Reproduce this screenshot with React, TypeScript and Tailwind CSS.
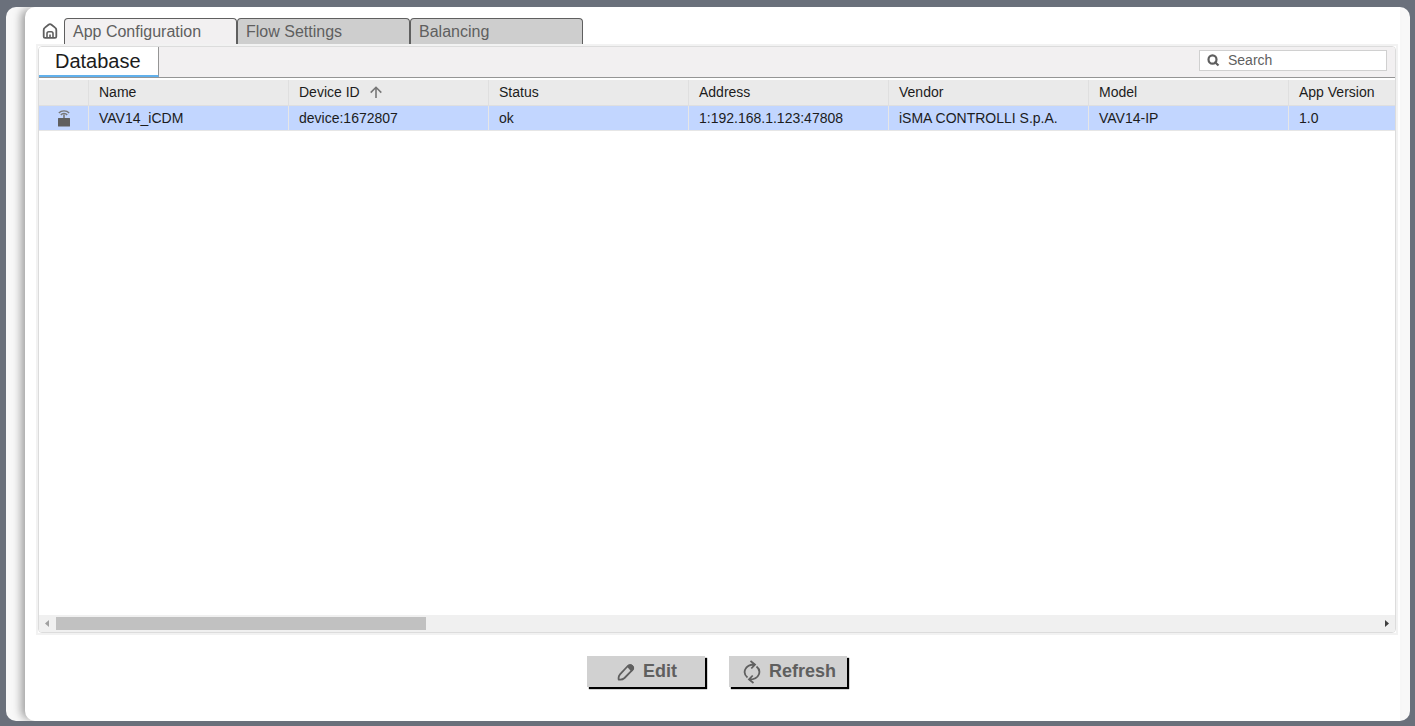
import React, { useState } from "react";

type Device = {
    name: string;
    deviceId: string;
    status: string;
    address: string;
    vendor: string;
    model: string;
    appVersion: string;
};

const TABS = ["App Configuration", "Flow Settings", "Balancing"];

const COLUMNS: { key: keyof Device; label: string }[] = [
    { key: "name", label: "Name" },
    { key: "deviceId", label: "Device ID" },
    { key: "status", label: "Status" },
    { key: "address", label: "Address" },
    { key: "vendor", label: "Vendor" },
    { key: "model", label: "Model" },
    { key: "appVersion", label: "App Version" },
];

const DEVICES: Device[] = [
    {
        name: "VAV14_iCDM",
        deviceId: "device:1672807",
        status: "ok",
        address: "1:192.168.1.123:47808",
        vendor: "iSMA CONTROLLI S.p.A.",
        model: "VAV14-IP",
        appVersion: "1.0",
    },
];

function HomeIcon() {
    return (
        <svg width="16" height="16" viewBox="0 0 16 16" fill="none" stroke="#5f5f5f" strokeWidth="1.8" strokeLinejoin="round">
            <path d="M1.700 7c0-1 .4-1.800 1.200-2.400L6.500 1.700a2.500 2.500 0 0 1 3 0l3.600 2.900c.8.6 1.200 1.400 1.200 2.400v6.500c0 .9-.5 1.400-1.400 1.400H3.100c-.9 0-1.400-.5-1.400-1.400z" />
            <path d="M5 14.500v-4A1.700 1.700 0 0 1 6.700 8.800h2.600a1.700 1.700 0 0 1 1.700 1.700v4" strokeWidth="1.6" />
            <path d="M8 11.500v3" strokeWidth="1.600" />
        </svg>
    );
}

function SearchIcon() {
    return (
        <svg width="13" height="13" viewBox="0 0 13 13" fill="none" stroke="#5f5f5f" strokeWidth="2.2">
            <ellipse cx="5.500" cy="5.500" rx="4" ry="4.200" />
            <path d="M7.500 7.800 11.500 11.500" />
        </svg>
    );
}

function SortIcon() {
    return (
        <svg width="12" height="12" viewBox="0 0 12 12" fill="none" stroke="#777" strokeWidth="1.6">
            <path d="M6 12V1.500M.7 6.600 6 1.300l5.300 5.300" />
        </svg>
    );
}

function DeviceIcon() {
    return (
        <svg className="mx-auto block" width="14" height="17" viewBox="0 0 14 17" fill="none" stroke="#777">
            <path d="M1.800 3C4.500.2 9.500.2 12.200 3M3.800 5c1.500-2 4.900-2 6.400 0" strokeWidth="1.3" />
            <path d="M7 4.500v4" strokeWidth="1.6" />
            <rect x="1" y="8" width="12" height="8.500" rx=".5" fill="#5f5f5f" stroke="none" />
        </svg>
    );
}

function PencilIcon() {
    return (
        <svg width="18" height="18" viewBox="0 0 18 18" fill="none" stroke="#5f5f5f" strokeWidth="1.8" strokeLinejoin="round">
            <path d="M1.700 16.500c-.3-1.700 0-3.800 1.300-5.200L10.800 3a3 3 0 0 1 4.300 0 3 3 0 0 1 .1 4.200L7.500 15c-1.500 1.400-3.900 1.900-5.800 1.500z" />
            <path d="M9.800 3.500 11 2.200a3.600 3.600 0 0 1 4.800.2 3.600 3.600 0 0 1 .2 5l-1.500 1.400z" fill="#5f5f5f" stroke="none" />
        </svg>
    );
}

function RefreshIcon() {
    return (
        <svg width="18" height="24" viewBox="0 0 18 24" fill="none" stroke="#5f5f5f" strokeWidth="1.8">
            <path d="M4.500 17.500C-.5 13.500.8 4.500 12 4.500M7.500 1 12 4.500 8.300 8.500" />
            <path d="M13.500 6.500c5 4 3.700 13-7.500 13M10.500 23 6 19.500l3.700-4" />
        </svg>
    );
}

function ActionButton({ label, icon, className }: { label: string; icon: React.ReactNode; className: string }) {
    return (
        <button
            type="button"
            className={`flex h-[31px] w-[118px] items-center gap-2 bg-[#d1d1d1] text-lg leading-none font-bold text-[#5f5f5f] shadow-[2px_2px_1px_#000] ${className}`}
        >
            {icon}
            <span className="pb-0.5">{label}</span>
        </button>
    );
}

function DeviceTable() {
    return (
        <table className="w-full table-fixed border-separate border-spacing-0 text-left text-sm text-[#1c1c1c]">
            <colgroup>
                <col className="w-[50px]" />
                {COLUMNS.map((c) => (
                    <col key={c.key} className={c.key === "appVersion" ? "" : "w-[200px]"} />
                ))}
            </colgroup>
            <thead>
                <tr className="bg-[#eaeaea]">
                    <th scope="col" aria-label="Type" className="h-[26px] border-r border-b border-[#dfdfdf] p-0" />
                    {COLUMNS.map((c) => (
                        <th key={c.key} scope="col" className="h-[26px] border-r border-b border-[#dfdfdf] px-2.5 pt-0 pb-px font-normal whitespace-nowrap last:border-r-0">
                            <span className="flex items-center gap-2.5">
                                {c.label}
                                {c.key === "deviceId" && <SortIcon />}
                            </span>
                        </th>
                    ))}
                </tr>
            </thead>
            <tbody>
                {DEVICES.map((d) => (
                    <tr key={d.deviceId} className="bg-[#c2d6ff]">
                        <td className="h-[25px] border-r border-b border-[#e6e6e6] p-0"><DeviceIcon /></td>
                        {COLUMNS.map((c) => (
                            <td key={c.key} className="h-[25px] border-r border-b border-[#e6e6e6] px-2.5 py-0 whitespace-nowrap last:border-r-0">
                                {d[c.key]}
                            </td>
                        ))}
                    </tr>
                ))}
            </tbody>
        </table>
    );
}

function ScrollBar() {
    return (
        <div className="flex h-[17px] items-center bg-[#f0f0f0]">
            <button type="button" aria-label="Scroll left" className="flex w-[17px] justify-center">
                <svg width="5" height="7" viewBox="0 0 5 7"><path d="M4 0v7L0 3.500z" fill="#a0a0a0" /></svg>
            </button>
            <div className="flex-1">
                <div className="h-[13px] w-[28%] bg-[#c1c1c1]" />
            </div>
            <button type="button" aria-label="Scroll right" className="flex w-[17px] justify-center">
                <svg width="4" height="7" viewBox="0 0 4 7"><path d="M0 0v7l4-3.500z" fill="#404040" /></svg>
            </button>
        </div>
    );
}

export default function App() {
    const [active, setActive] = useState(TABS[0]);

    return (
        <div className="h-screen bg-[#6a707b] pt-[7px] pr-[5px] pb-[5px] pl-[6px] font-['Liberation_Sans',Arial,sans-serif]">
            <div className="h-full overflow-hidden rounded-[10px] bg-[#f8f8f8] pr-2.5 pl-[19px]">
                <div className="flex h-full flex-col rounded-l-[10px] bg-white pt-[11px] pr-0.5 pl-[11px] shadow-[-6px_0_8px_-2px_rgba(0,0,0,0.35)]">
                    {/* Main tabs */}
                    <nav className="flex h-[26px]">
                        <a href="#home" aria-label="Home" className="flex w-7 items-center justify-center">
                            <HomeIcon />
                        </a>
                        {TABS.map((tab) => (
                            <button
                                key={tab}
                                type="button"
                                onClick={() => setActive(tab)}
                                className={`w-[173px] rounded-t border border-b-0 border-[#5f5f5f] px-2 text-left text-base text-[#5f5f5f] ${tab === active ? "bg-[#f2f0f1]" : "bg-[#cecece]"}`}
                            >
                                {tab}
                            </button>
                        ))}
                    </nav>

                    {/* Device database */}
                    <main className="flex min-h-0 flex-1 flex-col border-2 border-[#f2f2f2]">
                        <div className="flex min-h-0 flex-1 flex-col overflow-hidden rounded border border-[#dcdcdc]">
                            <header className="flex h-[31px] justify-between border-b border-[#959595] bg-[#f2f0f1]">
                                <h1 className="flex w-[120px] items-center border-r border-b-2 border-r-[#959595] border-b-[#62b1ec] bg-white pl-4 text-xl text-[#1c1c1c]">
                                    Database
                                </h1>
                                <label className="mt-[3px] mr-2 flex h-[21px] w-[188px] items-center gap-2 border border-[#d0d0d0] bg-white px-[7px]">
                                    <SearchIcon />
                                    <input
                                        type="text"
                                        aria-label="Search"
                                        placeholder="Search"
                                        className="min-w-0 flex-1 pb-0.5 text-sm text-[#5f5f5f] outline-none placeholder:text-[#5f5f5f]"
                                    />
                                </label>
                            </header>
                            <div className="min-h-0 flex-1 overflow-hidden pt-0.5">
                                <DeviceTable />
                            </div>
                            <ScrollBar />
                        </div>
                    </main>

                    {/* Actions */}
                    <footer className="flex h-[86px] shrink-0 justify-center gap-6 pt-[21px]">
                        <ActionButton label="Edit" icon={<PencilIcon />} className="pl-[30px]" />
                        <ActionButton label="Refresh" icon={<RefreshIcon />} className="pl-[14px]" />
                    </footer>
                </div>
            </div>
        </div>
    );
}
